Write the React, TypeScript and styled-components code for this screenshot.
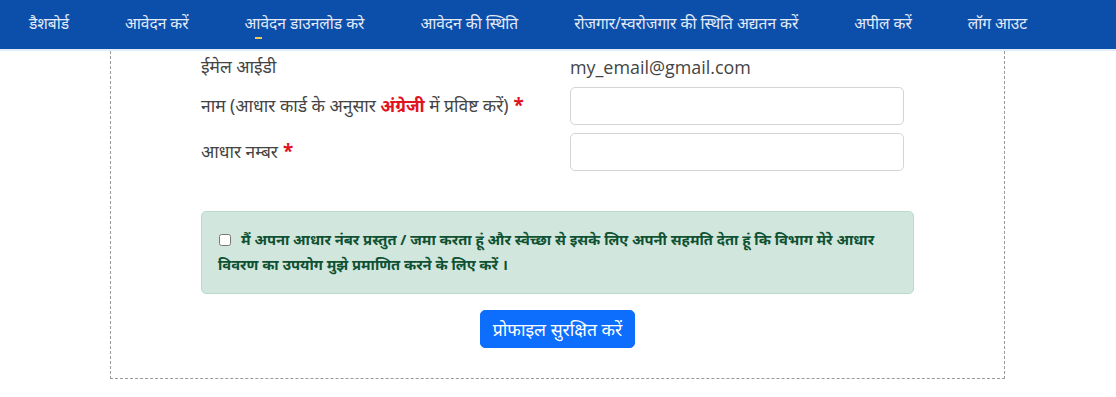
import React from "react";
import styled, { createGlobalStyle } from "styled-components";

const Global = createGlobalStyle`
  html, body { margin: 0; padding: 0; background: #fff; }
  body { font-family: "Noto Sans", "Liberation Sans", sans-serif; width: 1116px; height: 397px; overflow: hidden; }
  * { box-sizing: border-box; }
`;

const Nav = styled.nav`
  height: 49px;
  background: #0b4fab;
  display: flex;
  align-items: center;
  padding-left: 1px;
  border-bottom: 2px solid #e3edf9;
  box-sizing: content-box;
`;

const NavItem = styled.a<{ $active?: boolean }>`
  position: relative;
  padding: 0 28px;
  color: #e4eaf6;
  font-size: 15.5px;
  text-decoration: none;
  white-space: nowrap;
  line-height: 20px;
  margin-top: -3px;
  &::after {
    content: "";
    display: ${(p) => (p.$active ? "block" : "none")};
    position: absolute;
    left: 38px;
    bottom: -6px;
    width: 7px;
    height: 2px;
    background: #f2c94c;
  }
`;

const Panel = styled.section`
  width: 895px;
  margin: 0 0 0 110px;
  border: 1px dashed #9a9a9a;
  border-top: none;
  padding: 4px 90px 30px;
  height: 328px;
`;

const FormGrid = styled.div`
  display: grid;
  grid-template-columns: 369px 334px;
  row-gap: 8px;
  align-items: center;
`;

const Label = styled.div`
  color: #444;
  font-size: 17.4px;
  line-height: 24px;
  margin-top: -3px;
`;

const Value = styled.div`
  color: #444;
  font-family: "Open Sans", "Noto Sans", sans-serif;
  font-size: 17.9px;
  line-height: 24px;
`;

const Highlight = styled.span`
  color: #e0141e;
  font-weight: 700;
`;

const Req = styled.span`
  color: #e0141e;
  font-weight: 700;
  font-size: 19px;
  margin-left: 5px;
`;

const Input = styled.input`
  width: 334px;
  height: 38px;
  border: 1px solid #d5d5d5;
  border-radius: 5px;
  background: #fff;
  padding: 6px 12px;
  font-size: 16px;
`;

const Alert = styled.div`
  margin-top: 40px;
  background: #d1e7dd;
  border: 1px solid #badbcc;
  border-radius: 5px;
  padding: 15px 16px 16px;
  color: #0f5132;
  font-size: 14.7px;
  font-weight: 700;
  line-height: 25px;
`;

const Check = styled.input`
  width: 12px;
  height: 12px;
  margin: 0 10px 0 1px;
  vertical-align: -1px;
`;

const Actions = styled.div`
  display: flex;
  justify-content: center;
  margin-top: 16px;
`;

const Button = styled.button`
  background: #0d6efd;
  color: #fff;
  border: 1px solid #0d6efd;
  border-radius: 5px;
  height: 38px;
  padding: 0 12px;
  font-size: 17.6px;
  font-family: inherit;
`;

const items = [
  "डैशबोर्ड",
  "आवेदन करें",
  "आवेदन डाउनलोड करे",
  "आवेदन की स्थिति",
  "रोजगार/स्वरोजगार की स्थिति अद्यतन करें",
  "अपील करें",
  "लॉग आउट",
];

export default function App() {
  return (
    <>
      <Global />
      <Nav>
        {items.map((t, i) => (
          <NavItem key={t} $active={i === 2}>
            {t}
          </NavItem>
        ))}
      </Nav>
      <Panel>
        <FormGrid>
          <Label>ईमेल आईडी</Label>
          <Value>my_email@gmail.com</Value>
          <Label>
            नाम (आधार कार्ड के अनुसार <Highlight>अंग्रेजी</Highlight> में प्रविष्ट करें)
            <Req>*</Req>
          </Label>
          <Input />
          <Label>
            आधार नम्बर<Req>*</Req>
          </Label>
          <Input />
        </FormGrid>
        <Alert>
          <Check type="checkbox" />
          मैं अपना आधार नंबर प्रस्तुत / जमा करता हूं और स्वेच्छा से इसके लिए अपनी सहमति देता हूं कि विभाग मेरे आधार
          विवरण का उपयोग मुझे प्रमाणित करने के लिए करें ।
        </Alert>
        <Actions>
          <Button>प्रोफाइल सुरक्षित करें</Button>
        </Actions>
      </Panel>
    </>
  );
}
